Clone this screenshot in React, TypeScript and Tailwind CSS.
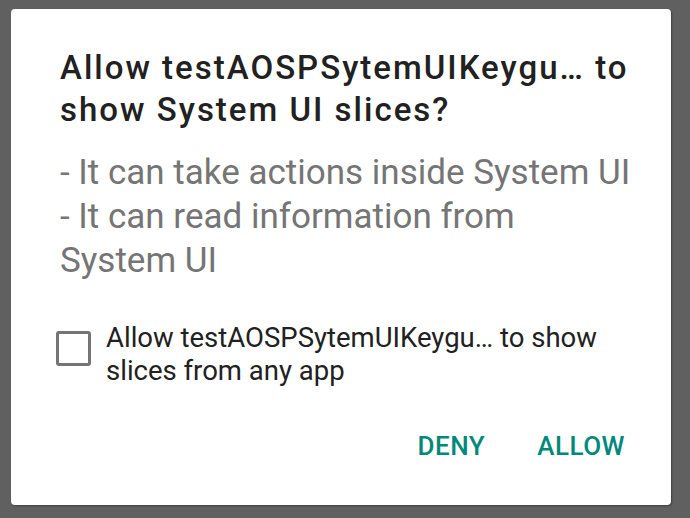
export default function App() {
  return (
    <div className="min-h-screen w-full bg-[#606060] pl-[11px] pr-[19px] pt-[9px] font-['Roboto',sans-serif]">
      <div className="h-[496px] w-[660px] rounded-[4px] bg-white shadow-[1px_1px_2px_rgba(0,0,0,0.35)]">
        <div className="pl-[49px] pr-[36px] pt-[38px]">
          <h1 className="text-[33px] font-medium leading-[42px] tracking-[2px] text-[#212121]">
            Allow testAOSPSytemUIKeygu… to show System UI slices?
          </h1>
          <div className="mt-[20px] text-[35px] leading-[44px] text-[#757575]">
            <p>- It can take actions inside System UI</p>
            <p>- It can read information from System UI</p>
          </div>
          <label className="ml-[-4px] mt-[38px] flex items-start gap-[15px]">
            <span className="mt-[10px] h-[35px] w-[35px] shrink-0 rounded-[3px] border-[3.5px] border-[#757575]" />
            <span className="text-[27.5px] leading-[33px] text-[#212121]">
              Allow testAOSPSytemUIKeygu… to show slices from any app
            </span>
          </label>
        </div>
        <div className="mt-[43px] flex justify-end gap-[52px] pr-[46px] text-[26px] font-medium leading-[32px] tracking-[0.5px] text-[#00897b]">
          <button type="button">DENY</button>
          <button type="button">ALLOW</button>
        </div>
      </div>
    </div>
  );
}
